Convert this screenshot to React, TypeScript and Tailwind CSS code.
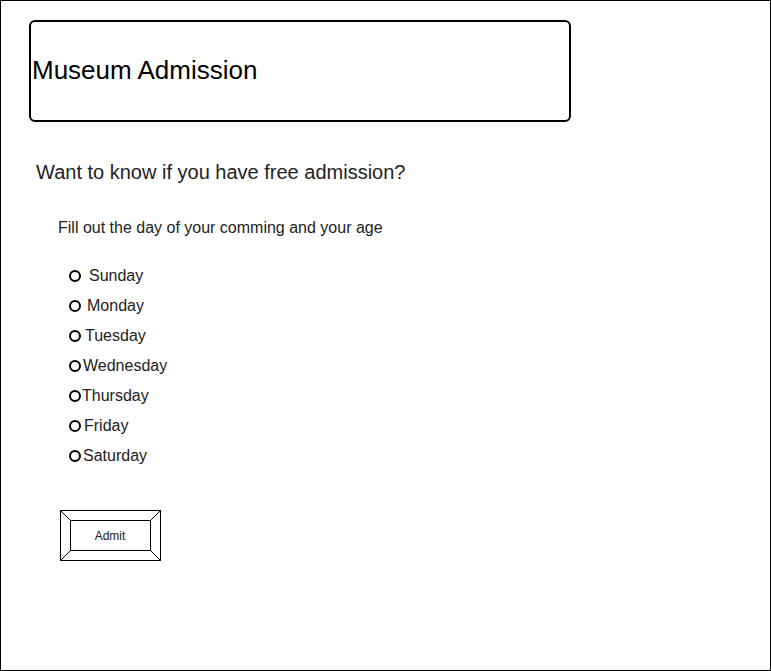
import React from 'react';

const days = [
  { name: 'Sunday', gap: 'ml-[8px]' },
  { name: 'Monday', gap: 'ml-[6px]' },
  { name: 'Tuesday', gap: 'ml-[4px]' },
  { name: 'Wednesday', gap: 'ml-[2px]' },
  { name: 'Thursday', gap: 'ml-[1px]' },
  { name: 'Friday', gap: 'ml-[3px]' },
  { name: 'Saturday', gap: 'ml-[2px]' },
];

const App: React.FC = () => {
  return (
    <div className="w-[771px] h-[671px] border border-black bg-white text-[#1a1a1a] font-['Liberation_Sans',Arial,sans-serif] box-border">
      {/* Header card */}
      <div className="ml-[28px] mt-[19px] w-[542px] h-[102px] border-2 border-black rounded-[6px] flex items-center">
        <h1 className="text-[26px] leading-none ml-[1px] -mt-[2px] text-black">Museum Admission</h1>
      </div>

      <p className="ml-[35px] mt-[38px] text-[20px] leading-[24px] text-[#222]">Want to know if you have free admission?</p>

      <p className="ml-[57px] mt-[34px] text-[16px] leading-[20px] text-[#222]">Fill out the day of your comming and your age</p>

      <div className="ml-[68px] mt-[23px] flex flex-col">
        {days.map((d) => (
          <label key={d.name} className="flex items-center h-[30px] text-[16px] text-[#222]">
            <span className="w-[12px] h-[12px] rounded-full border-2 border-black shrink-0" />
            <span className={d.gap}>{d.name}</span>
          </label>
        ))}
      </div>

      {/* Admit button */}
      <div className="ml-[58px] mt-[39px] relative w-[102px] h-[51px]">
        <svg className="absolute inset-0" width="102" height="51" viewBox="0 0 102 51">
          <rect x="1.5" y="0.5" width="100" height="50" fill="none" stroke="#000" />
          <rect x="11.5" y="10.5" width="80" height="30" fill="none" stroke="#000" />
          <line x1="1.5" y1="0.5" x2="11.5" y2="10.5" stroke="#000" />
          <line x1="101.5" y1="0.5" x2="91.5" y2="10.5" stroke="#000" />
          <line x1="1.5" y1="50.5" x2="11.5" y2="40.5" stroke="#000" />
          <line x1="101.5" y1="50.5" x2="91.5" y2="40.5" stroke="#000" />
        </svg>
        <button className="relative w-full h-full flex items-center justify-center text-[12px] text-[#222]">Admit</button>
      </div>
    </div>
  );
};

export default App;
